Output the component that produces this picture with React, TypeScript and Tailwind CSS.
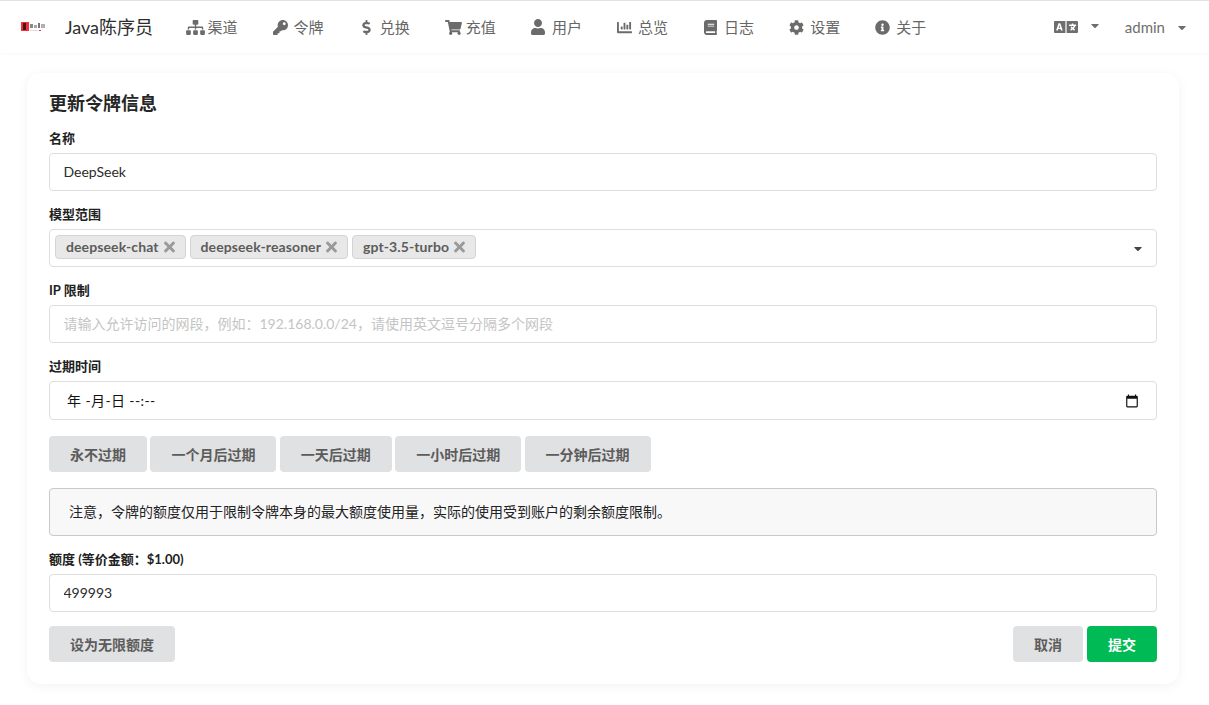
import { ReactNode } from "react";
import {
  FaBook,
  FaCaretDown,
  FaChartBar,
  FaCog,
  FaDollarSign,
  FaInfoCircle,
  FaKey,
  FaLanguage,
  FaShoppingCart,
  FaSitemap,
  FaTimes,
  FaUser,
} from "react-icons/fa";

const navItems = [
  { label: "渠道", icon: <FaSitemap className="h-[15px] w-[19px] shrink-0 translate-x-[1px]" /> },
  { label: "令牌", icon: <FaKey className="h-[15px] w-[15px] shrink-0" /> },
  { label: "兑换", icon: <FaDollarSign className="h-[15px] w-[9px] shrink-0" /> },
  { label: "充值", icon: <FaShoppingCart className="h-[15px] w-[17px] shrink-0 translate-x-[1px]" /> },
  { label: "用户", icon: <FaUser className="h-[16px] w-[14px] shrink-0" /> },
  { label: "总览", icon: <FaChartBar className="h-[15px] w-[15px] shrink-0" /> },
  { label: "日志", icon: <FaBook className="h-[15px] w-[13px] shrink-0" /> },
  { label: "设置", icon: <FaCog className="h-[15px] w-[15px] shrink-0" /> },
  { label: "关于", icon: <FaInfoCircle className="h-[15px] w-[15px] shrink-0" /> },
];

const expiryButtons = ["永不过期", "一个月后过期", "一天后过期", "一小时后过期", "一分钟后过期"];
const models = ["deepseek-chat", "deepseek-reasoner", "gpt-3.5-turbo"];

const Logo = () => (
  <svg width="25" height="10" viewBox="0 0 25 10" className="shrink-0">
    <rect x="0" y="0" width="8" height="9" fill="#f0303a" />
    <rect x="2" y="1" width="3" height="7" fill="#4a1518" />
    <rect x="9" y="2" width="3" height="4" fill="#8a8a8a" />
    <rect x="13" y="3" width="3" height="3" fill="#a5a5a5" />
    <rect x="17" y="1" width="2" height="5" fill="#777777" />
    <rect x="20" y="2" width="4" height="4" fill="#b0b0b0" />
    <rect x="9" y="8" width="8" height="1" fill="#dddddd" />
    <rect x="18" y="8" width="2" height="1" fill="#f0303a" />
  </svg>
);

const Field = ({ label, children }: { label: string; children: ReactNode }) => (
  <div className="mb-[14px]">
    <label className="block mb-[6px] h-[18px] text-[13px] leading-[18px] font-bold text-[#212121]">{label}</label>
    {children}
  </div>
);

const inputClass =
  "block w-full h-[38px] px-[13.5px] pb-[2px] text-[14px] text-[#2b2b2b] bg-white border border-[#dededf] rounded-[4px] outline-none placeholder:text-[#c4c4c4]";

const GrayButton = ({ children }: { children: ReactNode }) => (
  <button className="h-[36px] px-[21px] rounded-[4px] bg-[#e0e1e2] text-[14px] font-bold text-[#5c5c5c]">
    {children}
  </button>
);

export default function App() {
  return (
    <div className="min-h-[705px] bg-white font-['Lato','Noto_Sans_CJK_SC',sans-serif]">
      <header className="h-[53px] flex items-center border-t border-[#e2e2e2] shadow-[0_1px_4px_rgba(0,0,0,0.03)]">
        <div className="flex items-center pl-[21px] w-[168px]">
          <Logo />
          <span className="ml-[19px] text-[18px] text-[#2e2e2e]">Java陈序员</span>
        </div>
        {navItems.map((item) => (
          <a key={item.label} className="flex items-center w-[86.1px] pl-[17px] text-[15px] text-[#666666]">
            <span className="flex justify-center w-[18px] mr-[4.5px] text-[#6b6b6b]">{item.icon}</span>
            {item.label}
          </a>
        ))}
        <div className="ml-auto flex items-center text-[#6e6e6e]">
          <FaLanguage className="text-[24px]" />
          <FaCaretDown className="ml-[13px] mb-[3px] h-[13px] w-[8px]" />
          <span className="ml-[26px] text-[15px]">admin</span>
          <FaCaretDown className="ml-[13px] mr-[23px] h-[13px] w-[8px]" />
        </div>
      </header>

      <main className="pt-[20px] pl-[27px] pr-[30px] pb-[21px]">
        <div className="rounded-[14px] bg-white px-[22px] pt-[18px] pb-[22px] shadow-[0_2px_12px_rgba(0,0,0,0.05)]">
          <h1 className="h-[24px] mb-[14px] text-[18px] leading-[24px] font-bold text-[#262626]">更新令牌信息</h1>

          <Field label="名称">
            <input className={inputClass} value="DeepSeek" readOnly />
          </Field>

          <Field label="模型范围">
            <div className="flex items-center h-[38px] pl-[5px] pr-[14px] bg-white border border-[#dededf] rounded-[4px]">
              <div className="flex gap-[4px] mb-[2px]">
                {models.map((model) => (
                  <span
                    key={model}
                    className="flex items-center h-[24px] pl-[10px] pr-[10px] pb-[1px] bg-[#e8e8e8] border border-[#d4d4d5] rounded-[4px] text-[14px] tracking-[0.1px] font-bold text-[#5c5c5c]"
                  >
                    {model}
                    <FaTimes className="ml-[5px] h-[16px] w-[11px] text-[#9a9a9a]" />
                  </span>
                ))}
              </div>
              <FaCaretDown className="ml-auto h-[13px] w-[8px] text-[#444444]" />
            </div>
          </Field>

          <Field label="IP 限制">
            <input className={inputClass} placeholder="请输入允许访问的网段，例如：192.168.0.0/24，请使用英文逗号分隔多个网段" readOnly />
          </Field>

          <Field label="过期时间">
            <div className="flex items-center h-[39px] pl-[17px] pr-[17px] bg-white border border-[#dededf] rounded-[4px] text-[14px] text-[#111111]">
              <span className="tracking-[0.4px]">年 -月-日 --:--</span>
              <svg viewBox="0 0 24 24" width="14" height="14" className="ml-auto" fill="#111111">
                <path d="M20 3h-1V1h-2v2H7V1H5v2H4c-1.1 0-2 .9-2 2v16c0 1.1.9 2 2 2h16c1.1 0 2-.9 2-2V5c0-1.1-.9-2-2-2zm0 18H4V8h16v13z" />
              </svg>
            </div>
          </Field>

          <div className="flex gap-[3.4px] mt-[16px]">
            {expiryButtons.map((text) => (
              <GrayButton key={text}>{text}</GrayButton>
            ))}
          </div>

          <div className="flex items-center h-[48px] mt-[16px] mb-[14px] px-[19px] pb-[2px] bg-[#f8f8f9] border border-[#c9c9ca] rounded-[4px] text-[14px] text-[#222222]">
            注意，令牌的额度仅用于限制令牌本身的最大额度使用量，实际的使用受到账户的剩余额度限制。
          </div>

          <Field label="额度 (等价金额：$1.00)">
            <input className={inputClass} value="499993" readOnly />
          </Field>

          <div className="flex">
            <GrayButton>设为无限额度</GrayButton>
            <div className="ml-auto flex gap-[4px]">
              <GrayButton>取消</GrayButton>
              <button className="h-[36px] px-[21px] rounded-[4px] bg-[#00bb55] text-[14px] font-bold text-white">提交</button>
            </div>
          </div>
        </div>
      </main>
    </div>
  );
}
